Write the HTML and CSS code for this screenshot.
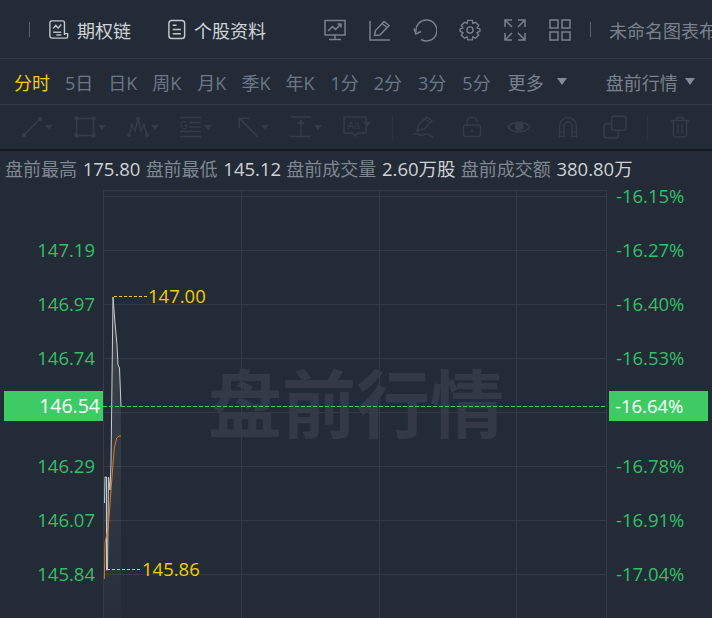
FILE: index.html
```html
<!DOCTYPE html>
<html lang="zh">
<head>
<meta charset="utf-8">
<title>盘前行情</title>
<link rel="stylesheet" href="styles.css">
</head>
<body>
<div class="app">
  <header class="topbar">
    <span class="sep first"></span>
    <span class="nav-item nav-a">
      <svg class="ico20" viewBox="0 0 22 22"><path d="M17 17V3.500A2 2 0 0 0 15 1.500H3A2 2 0 0 0 1 3.500V18A2.500 2.500 0 0 0 3.500 20.500H19A1.500 1.500 0 0 0 20.500 19V15.500H17"/><path d="M4.500 10L7.500 6.500L10 9.500L13.500 5.500"/><path d="M4.500 14H13.500"/><path d="M8 17H13.500"/></svg>
      期权链
    </span>
    <span class="nav-item nav-b">
      <svg class="ico20" viewBox="0 0 20 22"><rect x="1.500" y="1.500" width="16.500" height="19" rx="3"/><path d="M5.500 6.500H9.500M5.500 11H14M5.500 15.500H14"/></svg>
      个股资料
    </span>
    <div class="tools">
      <svg class="ico22 dim" viewBox="0 0 22 22"><rect x="1" y="1.500" width="20" height="14.500"/><path d="M4 12L8.500 7.500L11.500 10.500L16.500 5.500M13.500 5H17V8.500"/><path d="M11 16V20M5 20.500H17"/></svg>
      <svg class="ico22 dim" viewBox="0 0 22 22"><path d="M1 2V21H21"/><path d="M5.500 16.500L6.500 11.500L15 2.500L20 6.500L11 16Z"/><path d="M13 4.500L18 8.500"/></svg>
      <svg class="ico24 dim" viewBox="0 0 24 24"><path d="M3 14A10.500 10.500 0 1 1 8 21.500"/><path d="M1 10.500L2.800 16L8 13.500"/></svg>
      <svg class="ico22 dim" viewBox="0 0 24 24"><path d="M9.500 1.500H14.500L15.200 4.800L18 3.500L21.500 7L19.700 9.800L22.800 11V13.500L19.700 14.800L21.500 17.500L18 21L15.200 19.500L14.500 22.800H9.500L8.800 19.500L6 21L2.500 17.500L4.300 14.800L1.200 13.500V11L4.300 9.800L2.500 7L6 3.500L8.800 4.800Z"/><circle cx="12" cy="12" r="3.400"/></svg>
      <svg class="ico22 dim" viewBox="0 0 22 22"><path d="M1 8V1H8M1 1L8 8M14 1H21V8M21 1L14 8M1 14V21H8M1 21L8 14M21 14V21H14M21 21L14 14"/></svg>
      <svg class="ico22 dim" viewBox="0 0 22 22"><rect x="1" y="1" width="8" height="8"/><rect x="13" y="1" width="8" height="8"/><rect x="1" y="13" width="8" height="8"/><rect x="13" y="13" width="8" height="8"/></svg>
    </div>
    <span class="sep second"></span>
    <span class="chart-name">未命名图表布局</span>
  </header>

  <nav class="periods">
    <span class="period active">分时</span>
    <span class="period">5日</span>
    <span class="period">日K</span>
    <span class="period wide">周K</span>
    <span class="period">月K</span>
    <span class="period">季K</span>
    <span class="period wide">年K</span>
    <span class="period">1分</span>
    <span class="period wide">2分</span>
    <span class="period wide">3分</span>
    <span class="period">5分</span>
    <span class="period more">更多<i class="caret"></i></span>
    <span class="session">盘前行情<i class="caret"></i></span>
  </nav>

  <div class="drawbar">
    <span class="tool t1"><svg class="dico" viewBox="0 0 22 22"><circle cx="3" cy="19" r="2.200" class="fill"/><circle cx="19" cy="3" r="2.200" class="fill"/><path d="M3 19L19 3"/></svg><i class="mini"></i></span>
    <span class="tool t2"><svg class="dico" viewBox="0 0 22 22"><rect x="2.500" y="2.500" width="17" height="17"/><circle cx="2.500" cy="2.500" r="2.200" class="fill"/><circle cx="19.500" cy="2.500" r="2.200" class="fill"/><circle cx="2.500" cy="19.500" r="2.200" class="fill"/><circle cx="19.500" cy="19.500" r="2.200" class="fill"/></svg><i class="mini"></i></span>
    <span class="tool t3"><svg class="dico" viewBox="0 0 22 22"><path d="M2 19L5 9L8 15L11 3L14 15L17 9L20 19"/><circle cx="2" cy="19" r="2" class="fill"/><circle cx="5" cy="9" r="1.500" class="fill"/><circle cx="11" cy="3" r="2" class="fill"/><circle cx="17" cy="9" r="1.500" class="fill"/><circle cx="20" cy="19" r="2" class="fill"/></svg><i class="mini"></i></span>
    <span class="tool t4"><svg class="dico" viewBox="0 0 22 22"><path d="M0 1.500H21M9 6.500H21M9 11H21M0 15.500H21M0 20.500H21"/><text x="0" y="12.500" class="gt">G</text></svg><i class="mini"></i></span>
    <span class="tool t5"><svg class="dico" viewBox="0 0 20 20"><path d="M2 11V2H11M2 2L19 19"/></svg><i class="mini"></i></span>
    <span class="tool t6"><svg class="dico" viewBox="0 0 20 22"><path d="M0 1H20M0 20.500H20M10 5V20"/><path d="M6 8L10 3.500L14 8Z" class="fill"/></svg><i class="mini"></i></span>
    <span class="tool t7"><svg class="dico wide" viewBox="0 0 24 22"><path d="M1 1H23V17H15L12 20L9 17H1Z"/><text x="4.500" y="13" class="gt">Aa</text></svg><i class="mini over"></i></span>
    <span class="dsep s1"></span>
    <span class="tool t8"><svg class="dico" viewBox="0 0 22 22"><path d="M5 15L7 8L15 1L20 5L12 13ZM13 3L18 7"/><path d="M1 19C5 15 7 21 11 19S15 18 21 21"/></svg></span>
    <span class="tool t9"><svg class="dico" viewBox="0 0 20 22"><rect x="1.500" y="9" width="17" height="11.500" rx="2"/><path d="M5 9V6A5 5 0 0 1 15 6"/><path d="M10 13.500V16"/></svg></span>
    <span class="tool t10"><svg class="dico eye" viewBox="0 0 24 16"><path d="M1 8C6 1.500 18 1.500 23 8C18 14.500 6 14.500 1 8Z"/><circle cx="12" cy="7.500" r="4.500" class="fill"/></svg></span>
    <span class="tool t11"><svg class="dico" viewBox="0 0 20 22"><path d="M1.500 20.500V10A8.500 8.500 0 0 1 18.500 10V20.500H14V10A4 4 0 0 0 6 10V20.500ZM1.500 16H6M14 16H18.500"/></svg></span>
    <span class="tool t12"><svg class="dico copy" viewBox="0 0 22 22"><rect x="8" y="1" width="13" height="13" rx="2"/><path d="M8 8H3A2 2 0 0 0 1 10V19A2 2 0 0 0 3 21H12A2 2 0 0 0 14 19V14"/></svg></span>
    <span class="dsep s2"></span>
    <span class="tool t13"><svg class="dico" viewBox="0 0 20 22"><path d="M1 4.500H19M7 4.500V1.500H13V4.500M3.500 4.500V18A3 3 0 0 0 6.500 21H13.500A3 3 0 0 0 16.500 18V4.500M8 8.500V17M12 8.500V17"/></svg></span>
  </div>

  <div class="stats">
    <span class="k">盘前最高</span> <span class="v">175.80</span>
    <span class="k">盘前最低</span> <span class="v">145.12</span>
    <span class="k">盘前成交量</span> <span class="v">2.60万股</span>
    <span class="k">盘前成交额</span> <span class="v">380.80万</span>
  </div>

  <section class="chart">
    <div class="axis axis-left">
      <span>147.19</span><span>146.97</span><span>146.74</span><span class="gap"></span><span>146.29</span><span>146.07</span><span>145.84</span>
    </div>
    <div class="plot">
      <span class="watermark">盘前行情</span>
      <svg class="plot-svg" viewBox="0 0 504 428">
        <defs>
          <linearGradient id="areaFade" x1="0" y1="0" x2="0" y2="1">
            <stop offset="0" stop-color="#fff" stop-opacity=".12"/>
            <stop offset="1" stop-color="#fff" stop-opacity=".02"/>
          </linearGradient>
        </defs>
        <g class="grid">
          <path d="M0.500 0V428M138.500 0V428M276.500 0V428M413.500 0V428M503.500 0V428"/>
          <path d="M0 0.500H504M0 6.500H504M0 60.500H504M0 114.500H504M0 168.500H504M0 222.500H504M0 276.500H504M0 330.500H504M0 384.500H504"/>
        </g>
        <path class="area" d="M1 428V313L2 287H8L10 107L12 133L14 155L15 175L16.500 178L18 217V428Z"/>
        <path class="price" d="M1.500 313L2 287H3.500V380H4.500L5.500 287L7 300L8 273L10 107L12 133L14 155L15 175L16.500 178L18 217"/>
        <path class="avg" d="M1.300 389L2 353L5.300 337L8 300L11.300 258L13.700 248L16 246L18 246"/>
        <path class="lead" d="M11 106.500H45"/>
        <path class="lead" d="M4 379.500H39"/>
        <path class="now" d="M0 216.500H504"/>
      </svg>
      <span class="mark mark-hi">147.00</span>
      <span class="mark mark-lo">145.86</span>
    </div>
    <div class="axis axis-right">
      <span>-16.15%</span><span>-16.27%</span><span>-16.40%</span><span>-16.53%</span><span class="gap"></span><span>-16.78%</span><span>-16.91%</span><span>-17.04%</span>
    </div>
    <span class="tag tag-left">146.54</span>
    <span class="tag tag-right">-16.64%</span>
  </section>
</div>
</body>
</html>
```

FILE: styles.css
```css
* { box-sizing: border-box; }
html, body { margin: 0; height: 100%; overflow: hidden; }
body {
  background: #232b36;
  font-family: "Open Sans", "Noto Sans CJK SC", sans-serif;
  color: #cfd3d8;
}
.app { width: 712px; height: 618px; overflow: hidden; display: flex; flex-direction: column; }

svg { fill: none; stroke: currentColor; stroke-width: 1.5; flex: none; display: block; }

.topbar {
  height: 59px; flex: none; display: flex; align-items: center;
  border-bottom: 1px solid #303a45; white-space: nowrap; overflow: hidden;
  padding-top: 1px;
}
.sep { width: 1px; height: 15px; background: #59626e; flex: none; }
.sep.first { margin-left: 29px; }
.nav-item { display: flex; align-items: center; gap: 8px; font-size: 18px; color: #cfd3d8; }
.nav-a { margin-left: 19px; }
.nav-b { margin-left: 36px; gap: 7px; }
.ico20 { width: 20px; height: 21px; color: #c4c8cd; }
.ico22 { width: 22px; height: 22px; }
.ico24 { width: 24px; height: 24px; margin: 0 -1px; }
.dim { color: #79818c; }
.tools { display: flex; align-items: center; gap: 23px; margin-left: 58px; }
.sep.second { margin-left: 19px; }
.chart-name { margin-left: 18px; font-size: 18px; color: #79818c; }

.periods {
  height: 46px; flex: none; display: flex; align-items: center; padding-left: 14px;
  border-bottom: 1px solid #303a45; font-size: 18px; color: #6b7787; white-space: nowrap;
}
.period { margin-right: 15px; }
.period.wide { margin-right: 16px; }
.period.active { color: #f2cb05; }
.period.more, .session { display: flex; align-items: center; color: #79818c; }
.period.more { margin-left: 2px; margin-right: 0; }
.session { margin-left: 39px; }
.caret {
  width: 0; height: 0; display: block; border: 5.500px solid transparent; border-top: 7px solid #838b95; border-bottom: 0;
}
.period.more .caret { margin-left: 13px; }
.session .caret { margin-left: 7px; }

.drawbar {
  height: 46px; flex: none; display: flex; align-items: center;
  border-bottom: 2px solid #14181e; color: #343c48; padding-left: 21px;
}
.tool { display: flex; align-items: center; gap: 2px; }
.dico { width: 22px; height: 22px; stroke-width: 1.500; }
.dico.wide { width: 24px; }
.dico.eye { width: 24px; height: 16px; }
.dico.copy { width: 24px; height: 24px; }
.fill { fill: currentColor; stroke: none; }
.gt { font-size: 10px; fill: currentColor; stroke: none; font-family: "Liberation Sans", sans-serif; }
.mini { width: 0; height: 0; display: block; border: 4px solid transparent; border-top: 5px solid #343c48; border-bottom: 0; }
.mini.over { margin-left: -6px; margin-top: -6px; }
.t2, .t3, .t4 { margin-left: 21px; }
.t5 { margin-left: 25px; }
.t6, .t7 { margin-left: 21px; }
.dsep { width: 1px; height: 24px; background: #2c3440; }
.s1 { margin-left: 21px; }
.t8 { margin-left: 19px; }
.t9 { margin-left: 27px; }
.t10 { margin-left: 24px; }
.t11 { margin-left: 26px; }
.t12 { margin-left: 24px; }
.s2 { margin-left: 20px; }
.t13 { margin-left: 21px; }

.stats { height: 36px; flex: none; padding-left: 5px; font-size: 18px; line-height: 36px; white-space: nowrap; color: #7e8792; }
.stats .v { color: #cdd1d6; font-size: 18.500px; margin: 0 0.500px 0 1px; }

.chart {
  flex: 1; position: relative; display: grid; grid-template-columns: 103px 504px 105px; min-height: 0;
}
.plot { position: relative; margin-top: 3px; }
.plot-svg { width: 504px; height: 428px; stroke-width: 1; position: relative; }
.grid { stroke: #323c48; }
.area { fill: url(#areaFade); stroke: none; }
.price { stroke: #c8ccd1; }
.avg { stroke: #e07b1e; }
.lead { stroke: #f2cb05; stroke-dasharray: 3 2; }
.now { stroke: #3ecb66; stroke-dasharray: 4 2; }
.watermark { position: absolute; left: 105px; top: 164px; font-size: 74px; font-weight: 700; line-height: 100px; color: #333a45; white-space: nowrap; }
.mark { position: absolute; font-size: 18.500px; line-height: 24px; color: #f2cb05; }
.mark-hi { left: 45px; top: 94px; }
.mark-lo { left: 39px; top: 367px; }

.axis { display: flex; flex-direction: column; font-size: 18.500px; line-height: 54px; color: #33bf66; white-space: nowrap; }
.axis span { height: 54px; flex: none; }
.axis-left { align-items: flex-end; padding-right: 8px; padding-top: 36px; }
.axis-right { padding-left: 9px; margin-top: -18px; }
.tag { position: absolute; height: 30px; line-height: 30px; background: #3ecb66; color: #fff; font-size: 18.500px; top: 204px; }
.tag-left { left: 4px; width: 99px; padding-right: 3px; text-align: right; font-size: 19.500px; }
.tag-right { left: 609px; width: 99px; padding-left: 6px; }
```
